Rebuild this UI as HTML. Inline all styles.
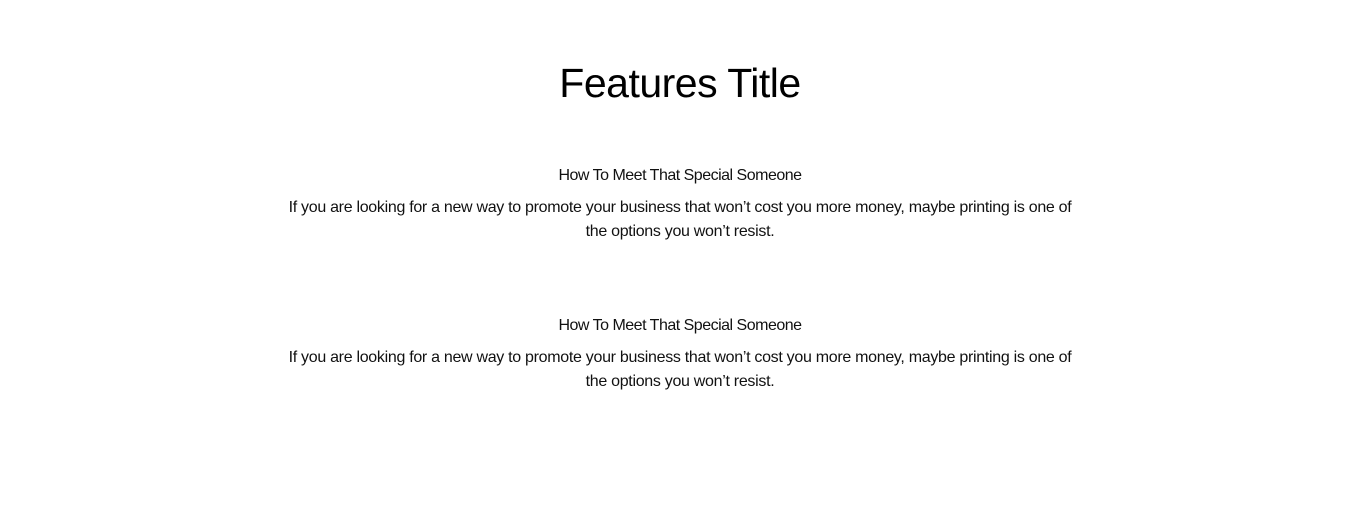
<!DOCTYPE html>
<html><head><meta charset="utf-8"><style>
html,body{margin:0;padding:0;background:#fff;width:1360px;height:522px;overflow:hidden}
body{font-family:"Liberation Sans",sans-serif;color:#111;text-align:center}
h1{position:absolute;left:0;right:0;top:56px;margin:0;font-weight:400;font-size:41px;line-height:54px;letter-spacing:-0.5px;color:#000}
.h{position:absolute;left:0;right:0;margin:0;font-size:16px;line-height:22px;letter-spacing:-0.5px}
.p{position:absolute;left:0;right:0;margin:0;font-size:16px;line-height:24px;white-space:nowrap;letter-spacing:-0.3px}
</style></head><body>
<h1>Features Title</h1>
<div class="h" style="top:165px">How To Meet That Special Someone</div>
<div class="p" style="top:196px">If you are looking for a new way to promote your business that won’t cost you more money, maybe printing is one of<br>the options you won’t resist.</div>
<div class="h" style="top:315px">How To Meet That Special Someone</div>
<div class="p" style="top:346px">If you are looking for a new way to promote your business that won’t cost you more money, maybe printing is one of<br>the options you won’t resist.</div>
</body></html>
